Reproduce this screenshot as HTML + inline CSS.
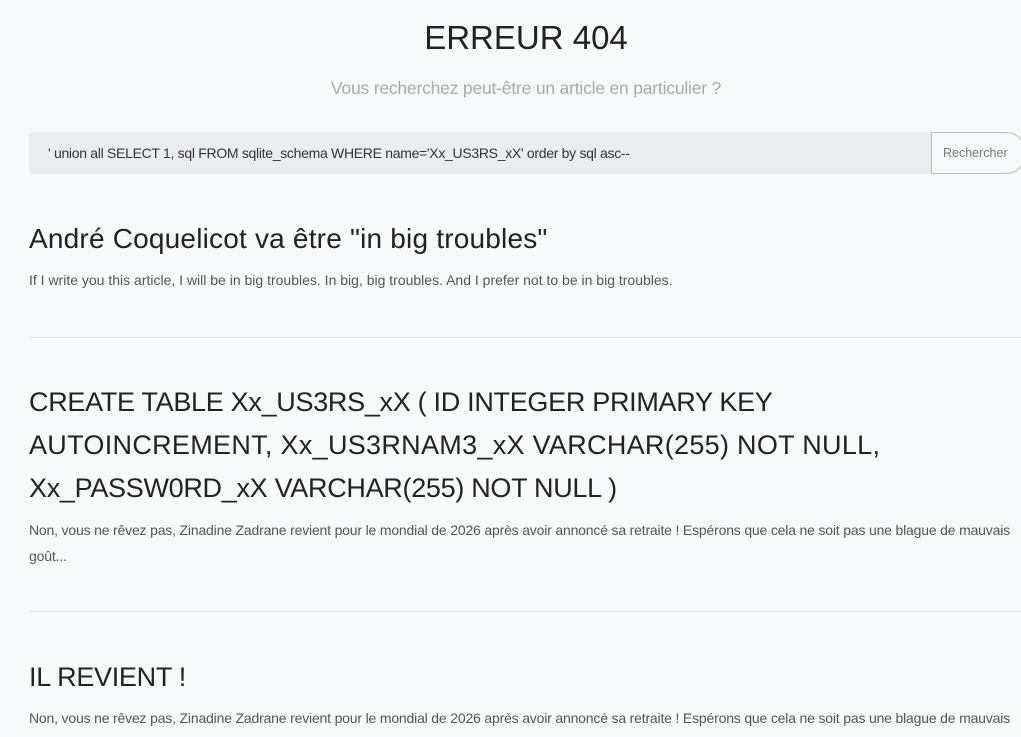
<!DOCTYPE html>
<html><head><meta charset="utf-8"><style>
body{margin:0;background:#f8f9fb;font-family:"Liberation Sans",sans-serif;color:#222;width:1021px;height:737px;overflow:hidden;position:relative}
.a{position:absolute;white-space:nowrap}
.p{font-size:14px;color:#555;letter-spacing:0px}
.q{letter-spacing:-0.18px}
.t{font-size:27px;color:#222;letter-spacing:-0.3px}
.hr{position:absolute;left:29px;width:992px;height:1px;background:#e2e3e6}
</style></head><body>
<div class="a" style="left:0;width:1052px;text-align:center;top:19px;font-size:33px;color:#222">ERREUR 404</div>
<div class="a" style="left:0;width:1052px;text-align:center;top:78px;font-size:17.5px;color:#aaa;letter-spacing:-0.2px">Vous recherchez peut-être un article en particulier ?</div>
<div class="a" style="left:29px;top:132px;width:902px;height:42px;background:#ebecef;border-radius:3px 0 0 3px"></div>
<div class="a" style="left:48px;top:145px;font-size:14px;color:#333;letter-spacing:-0.3px">' union all SELECT 1, sql FROM sqlite_schema WHERE name='Xx_US3RS_xX' order by sql asc--</div>
<div class="a" style="left:931px;top:132px;width:95px;height:42px;border:1px solid #bbb;border-radius:0 20px 20px 0;box-sizing:border-box;background:#f8f9fb"></div>
<div class="a" style="left:943px;top:146px;font-size:12.5px;color:#777">Rechercher</div>
<div class="a t" style="left:29px;top:223px;font-size:28px;letter-spacing:0.2px">André Coquelicot va être "in big troubles"</div>
<div class="a p" style="left:29px;top:272px">If I write you this article, I will be in big troubles. In big, big troubles. And I prefer not to be in big troubles.</div>
<div class="hr" style="top:337px"></div>
<div class="a t" style="left:29px;top:381px;line-height:43px">CREATE TABLE Xx_US3RS_xX ( ID INTEGER PRIMARY KEY<br><span style="letter-spacing:0.3px">AUTOINCREMENT, Xx_US3RNAM3_xX VARCHAR(255) NOT NULL,</span><br>Xx_PASSW0RD_xX VARCHAR(255) NOT NULL )</div>
<div class="a p q" style="left:29px;top:517px;line-height:26px">Non, vous ne rêvez pas, Zinadine Zadrane revient pour le mondial de 2026 après avoir annoncé sa retraite ! Espérons que cela ne soit pas une blague de mauvais<br>goût...</div>
<div class="hr" style="top:611px"></div>
<div class="a t" style="left:29px;top:662px">IL REVIENT !</div>
<div class="a p q" style="left:29px;top:710px">Non, vous ne rêvez pas, Zinadine Zadrane revient pour le mondial de 2026 après avoir annoncé sa retraite ! Espérons que cela ne soit pas une blague de mauvais</div>
</body></html>
